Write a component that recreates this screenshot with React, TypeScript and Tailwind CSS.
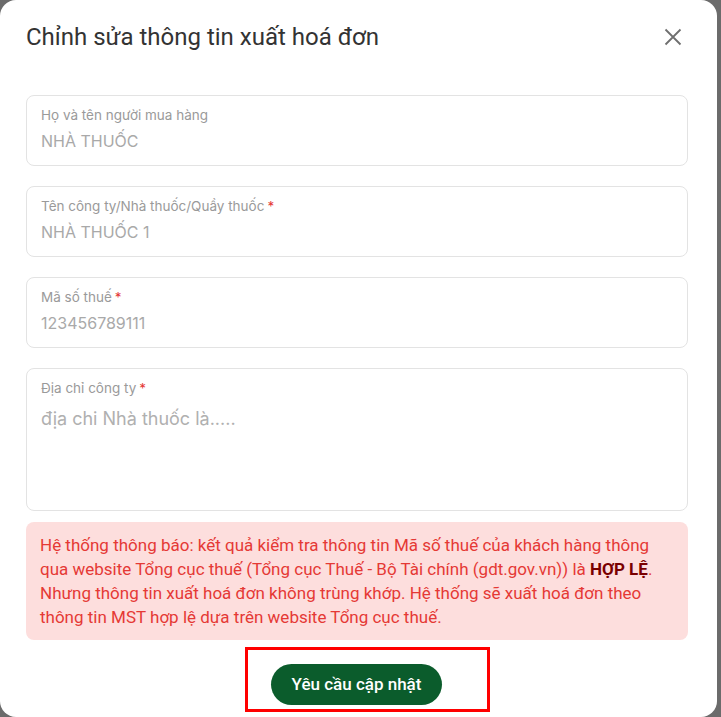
import React from "react";

const fields = [
  { label: "Họ và tên người mua hàng", value: "NHÀ THUỐC", required: false },
  { label: "Tên công ty/Nhà thuốc/Quầy thuốc", value: "NHÀ THUỐC 1", required: true },
  { label: "Mã số thuế", value: "123456789111", required: true },
];

const Field = ({ label, value, required }: { label: string; value: string; required: boolean }) => (
  <div className="h-[71px] rounded-lg border border-[#e3e3e3] px-[14px] pt-[11px]">
    <div className="flex items-start text-[13.5px] leading-[16px] text-[#9a9a9a]">
      {label}
      {required && <span className="ml-[3px] text-[#e53935]">*</span>}
    </div>
    <div className="mt-[8px] text-[16px] leading-[20px] text-[#a9a9a9]">{value}</div>
  </div>
);

export default function App() {
  return (
    <div className="flex h-[717px] w-[721px] bg-[#6b6b6b] font-['Roboto',sans-serif]">
      <div className="flex h-[717px] w-[717px] flex-col rounded-[16px] bg-white">
        <div className="flex items-center justify-between pl-[26px] pr-[35px] pt-[22px]">
          <h2 className="text-[24px] font-normal leading-[30px] text-[#333]">Chỉnh sửa thông tin xuất hoá đơn</h2>
          <svg width="18" height="18" viewBox="0 0 18 18" fill="none" stroke="#6f6f6f" strokeWidth="1.8">
            <path d="M1.5 1.5l15 15M16.5 1.5l-15 15" />
          </svg>
        </div>

        <div className="mt-[43px] flex w-[662px] flex-col gap-[20px] pl-[26px] box-content font-['Inter',sans-serif]">
          {fields.map((f) => (
            <Field key={f.label} {...f} />
          ))}
          <div className="h-[143px] rounded-lg border border-[#e3e3e3] px-[14px] pt-[11px]">
            <div className="flex items-start text-[13.5px] leading-[16px] text-[#9a9a9a]">
              Địa chỉ công ty
              <span className="ml-[3px] text-[#e53935]">*</span>
            </div>
            <div className="mt-[12px] text-[18px] leading-[22px] text-[#b0b0b0]">địa chi Nhà thuốc là.....</div>
          </div>
        </div>

        <div className="ml-[26px] mt-[11px] w-[662px] rounded-lg bg-[#fddedd] px-[14px] py-[11px] text-[17px] leading-[24px] text-[#e53935]">
          Hệ thống thông báo: kết quả kiểm tra thông tin Mã số thuế của khách hàng thông qua website Tổng cục thuế
          (Tổng cục Thuế - Bộ Tài chính (gdt.gov.vn)) là <b className="font-bold text-[#7a0000]">HỢP LỆ</b>. Nhưng
          thông tin xuất hoá đơn không trùng khớp. Hệ thống sẽ xuất hoá đơn theo thông tin MST hợp lệ dựa trên website
          Tổng cục thuế.
        </div>

        <div className="ml-[245px] mt-[7px] flex h-[65px] w-[245px] items-center border-[3px] border-[#ff0000] pl-[23px] pt-[10px]">
          <button
            type="button"
            className="h-[41px] w-[171px] rounded-full bg-[#0b5c2c] text-[17px] font-medium text-white"
          >
            Yêu cầu cập nhật
          </button>
        </div>
      </div>
    </div>
  );
}
